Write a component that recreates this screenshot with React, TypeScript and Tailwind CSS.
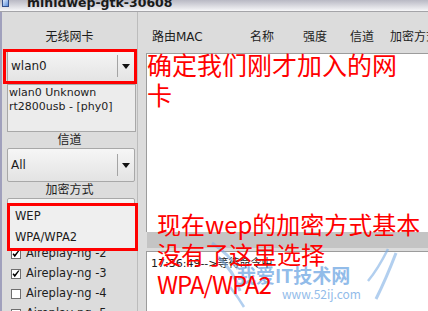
import type { ReactNode } from 'react'

function Arrow() {
  return (
    <svg width="8" height="5" viewBox="0 0 8 5">
      <path d="M0 0 L8 0 L4 5 Z" fill="#111" />
    </svg>
  )
}

function Combo({ text, className = '' }: { text: string; className?: string }) {
  return (
    <div className={`ml-[5px] w-[128px] h-[34px] flex items-center border border-[#a8a8a8] rounded-[2px] bg-gradient-to-b from-[#f6f6f6] to-[#e3e3e3] ${className}`}>
      <span className="flex-1 pl-[3px] text-[12px] text-[#1c1c1c]">{text}</span>
      <span className="w-px h-[22px] bg-[#a4a4a4]" />
      <span className="w-[16px] flex justify-center"><Arrow /></span>
    </div>
  )
}

function Check({ checked, label }: { checked?: boolean; label: string }) {
  return (
    <div className="h-[20px] flex items-center pl-[9px]">
      <span className="w-[10px] h-[10px] border border-[#6e6e6e] bg-white flex items-center justify-center">
        {checked && (
          <svg width="8" height="8" viewBox="0 0 8 8">
            <path d="M0.5 4.2 L2.8 7.2 L7.6 0.6 L6.2 0.4 L2.8 4.6 L1.6 3.2 Z" fill="#000" />
          </svg>
        )}
      </span>
      <span className="ml-[5px] text-[11.5px] text-[#1c1c1c]">{label}</span>
    </div>
  )
}

function Label({ children }: { children: ReactNode }) {
  return <div className="h-[16px] leading-[16px] text-center text-[12px] text-[#1c1c1c]">{children}</div>
}

export default function App() {
  return (
    <div className="relative w-[428px] h-[311px] overflow-hidden bg-[#dcdcdc] font-['DejaVu_Sans','Noto_Sans_CJK_SC',sans-serif]">
      {/* title bar */}
      <div className="relative h-[12px] overflow-hidden bg-gradient-to-b from-[#b9b9c4] to-[#f7f7f9] border-b border-[#a4a4a8]">
        <span className="absolute left-[2px] top-[-1px] w-[7px] h-[8px] border border-[#34508c] bg-gradient-to-br from-[#dce8fa] to-[#5b8fdc]" />
        <span className="absolute left-[27px] top-[-4px] leading-[14px] text-[12.5px] font-bold text-[#1a1a1a] whitespace-nowrap">minidwep-gtk-30608</span>
      </div>

      <div className="flex h-[299px] border-l-2 border-[#a0a0bc]">
        {/* left column */}
        <div className="w-[136px] shrink-0 border-r border-[#bcbcbc]">
          <div className="pt-[17px]"><Label>无线网卡</Label></div>
          <Combo text="wlan0" className="mt-[4px]" />
          <div className="ml-[5px] mt-[1px] w-[129px] h-[48px] border border-[#a8a8a8] bg-[#ececec] pl-[1px] pt-[1px] text-[11px] leading-[14px] text-[#1c1c1c]">
            <div>wlan0 Unknown</div>
            <div>rt2800usb - [phy0]</div>
          </div>
          <Label>信道</Label>
          <Combo text="All" />
          <Label>加密方式</Label>
          <Combo text="" />
          <div className="mt-[12px]">
            <Check checked label="Aireplay-ng -2" />
            <Check checked label="Aireplay-ng -3" />
            <Check label="Aireplay-ng -4" />
            <Check label="Aireplay-ng -5" />
          </div>
        </div>

        {/* right pane */}
        <div className="ml-[8px] flex-1 flex flex-col">
          <div className="h-[41px] shrink-0 flex items-center pt-[9px] pl-[6px] text-[12px] text-[#1c1c1c] whitespace-nowrap overflow-hidden">
            <span className="w-[98px] shrink-0">路由MAC</span>
            <span className="w-[53px] shrink-0">名称</span>
            <span className="w-[47px] shrink-0">强度</span>
            <span className="w-[40px] shrink-0">信道</span>
            <span className="shrink-0">加密方式</span>
          </div>
          <div className="h-[179px] shrink-0 bg-white border-t border-l border-[#9c9c9c]" />
          <div className="h-[16px] shrink-0 bg-[#c4c4c4] ml-[1px]" />
          <div className="flex-1 mt-[3px] bg-white border-t border-l border-[#9c9c9c] pl-[4px] pt-[5px] text-[11px] leading-[14px] text-[#1c1c1c] whitespace-nowrap">
            17:36:49--&gt;等待命令中
          </div>
        </div>
      </div>

      {/* red annotation boxes */}
      <div className="absolute left-[3px] top-[49px] w-[134px] h-[35px] border-[3px] border-[#ff0000]" />
      <div className="absolute left-[7px] top-[203px] w-[131px] h-[48px] border-[3px] border-[#ff0000] bg-[#efefef] text-[11.5px] text-[#1c1c1c]">
        <div className="h-[21px] flex items-center pl-[5px]">WEP</div>
        <div className="h-[21px] flex items-center pl-[5px]">WPA/WPA2</div>
      </div>

      {/* watermark */}
      <svg className="absolute left-[200px] top-[235px] opacity-60" width="228" height="76" viewBox="0 0 228 76">
        <path d="M12 8 Q30 20 38 34" stroke="#7fb0e6" strokeWidth="3" fill="none" />
        <path d="M18 22 Q34 36 40 56" stroke="#7fb0e6" strokeWidth="3" fill="none" />
        <path d="M30 52 Q38 62 44 72" stroke="#7fb0e6" strokeWidth="2.5" fill="none" />
        <path d="M196 18 Q186 44 176 64" stroke="#7fb0e6" strokeWidth="3" fill="none" />
        <path d="M188 14 Q178 34 168 46" stroke="#7fb0e6" strokeWidth="2.5" fill="none" />
      </svg>
      <div className="absolute left-[237px] top-[264px] text-[19px] leading-[22px] font-bold text-[#4a90dc] opacity-60 font-['Noto_Sans_CJK_SC',sans-serif] whitespace-nowrap">我爱IT技术网</div>
      <div className="absolute left-[282px] top-[287px] text-[12px] leading-[14px] text-[#4a90dc] opacity-60 font-['Noto_Sans_CJK_SC',sans-serif]">www.52ij.com</div>

      {/* red annotation text */}
      <div className="absolute left-[147px] top-[49px] text-[25px] leading-[30px] text-[#ff0000] font-['Noto_Sans_CJK_SC',sans-serif] whitespace-nowrap">
        确定我们刚才加入的网<br />卡
      </div>
      <div className="absolute left-[157px] top-[209px] text-[24px] leading-[30px] text-[#ff0000] font-['Noto_Sans_CJK_SC',sans-serif] whitespace-nowrap">
        现在wep的加密方式基本<br />没有了这里选择<br /><span className="tracking-[-1px]">WPA/WPA2</span>
      </div>
    </div>
  )
}
